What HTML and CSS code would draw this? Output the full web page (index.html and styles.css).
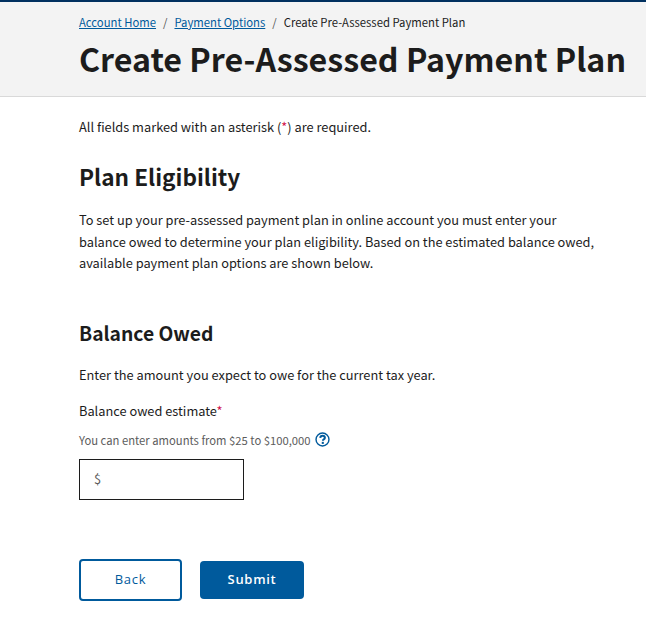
FILE: index.html
```html
<!DOCTYPE html>
<html lang="en">
<head>
    <meta charset="UTF-8">
    <title>Create Pre-Assessed Payment Plan</title>
    <link rel="stylesheet" href="styles.css">
</head>
<body>
    <header class="page-header">
        <nav class="breadcrumb">
            <a href="#">Account Home</a>
            <span class="sep">/</span>
            <a href="#">Payment Options</a>
            <span class="sep">/</span>
            <span>Create Pre-Assessed Payment Plan</span>
        </nav>
        <h1>Create Pre-Assessed Payment Plan</h1>
    </header>
    <main class="content">
        <p class="required-note">All fields marked with an asterisk (<span class="req">*</span>) are required.</p>
        <h2>Plan Eligibility</h2>
        <p class="intro">To set up your pre-assessed payment plan in online account you must enter your balance owed to determine your plan eligibility. Based on the estimated balance owed, available payment plan options are shown below.</p>
        <h3>Balance Owed</h3>
        <p class="expect">Enter the amount you expect to owe for the current tax year.</p>
        <label class="field-label" for="balance">Balance owed estimate<span class="req">*</span></label>
        <div class="hint">
            You can enter amounts from $25 to $100,000
            <svg class="help" width="15" height="15" viewBox="0 0 16 16">
                <circle cx="8" cy="8" r="6.9" fill="none" stroke="#005a9c" stroke-width="1.5"/>
                <path d="M5.6 6.2c.1-1.4 1.1-2.2 2.5-2.2 1.4 0 2.4.8 2.4 2 0 .9-.5 1.4-1.2 1.8-.6.4-.8.7-.8 1.4v.2" fill="none" stroke="#005a9c" stroke-width="2.2"/>
                <rect x="7.2" y="10.5" width="2.2" height="2.2" fill="#005a9c"/>
            </svg>
        </div>
        <div class="amount-box" id="balance">$</div>
        <div class="actions">
            <button class="btn btn-back">Back</button>
            <button class="btn btn-submit">Submit</button>
        </div>
    </main>
</body>
</html>
```

FILE: styles.css
```css
body {
    margin: 0;
    font-family: "Noto Sans CJK SC", "Noto Sans", sans-serif;
    color: #1c1c1c;
    background-color: #fff;
    font-size: 12.8px;
}

.page-header {
    background-color: #f3f3f3;
    border-top: 2px solid #00305f;
    border-bottom: 1px solid #d9d9d9;
    padding: 12px 0 0 79px;
    height: 82px;
}

.breadcrumb {
    font-size: 11.3px;
    line-height: 17px;
    display: flex;
    gap: 7px;
}

.breadcrumb a {
    color: #005a9c;
}

.sep {
    color: #555;
}

h1 {
    margin: 3px 0 0;
    font-size: 32.2px;
    line-height: 48px;
    font-weight: 700;
    white-space: nowrap;
}

.content {
    padding: 0 40px 0 79px;
}

.required-note {
    margin: 19px 0 0;
    line-height: 21px;
}

.req {
    color: #d01048;
}

h2 {
    margin: 23px 0 0;
    font-size: 22.6px;
    line-height: 34px;
}

.intro {
    margin: 15px 0 0;
    line-height: 21.6px;
}

h3 {
    margin: 44px 0 0;
    font-size: 19.3px;
    line-height: 30px;
}

.expect {
    margin: 16px 0 0;
    line-height: 21px;
}

.field-label {
    display: block;
    margin-top: 15px;
    line-height: 21px;
}

.hint {
    display: flex;
    align-items: center;
    gap: 4px;
    margin-top: 9px;
    font-size: 11.25px;
    line-height: 20px;
    color: #5c5c5c;
}

.amount-box {
    box-sizing: border-box;
    width: 165px;
    height: 41px;
    margin-top: 9px;
    padding-left: 14px;
    border: 1px solid #1c1c1c;
    line-height: 38px;
    color: #5c5c5c;
}

.actions {
    display: flex;
    align-items: center;
    gap: 18px;
    margin-top: 59px;
}

.btn {
    box-sizing: border-box;
    font-family: "Open Sans", sans-serif;
    font-size: 13px;
    letter-spacing: 0.7px;
    line-height: 16px;
    padding: 0 0 2px;
    border-radius: 4px;
    cursor: pointer;
}

.btn-back {
    width: 103px;
    height: 42px;
    background-color: #fff;
    color: #005a9c;
    border: 2px solid #005a9c;
}

.btn-submit {
    width: 104px;
    height: 38px;
    background-color: #005a9c;
    color: #fff;
    border: none;
    font-weight: 600;
}
```
